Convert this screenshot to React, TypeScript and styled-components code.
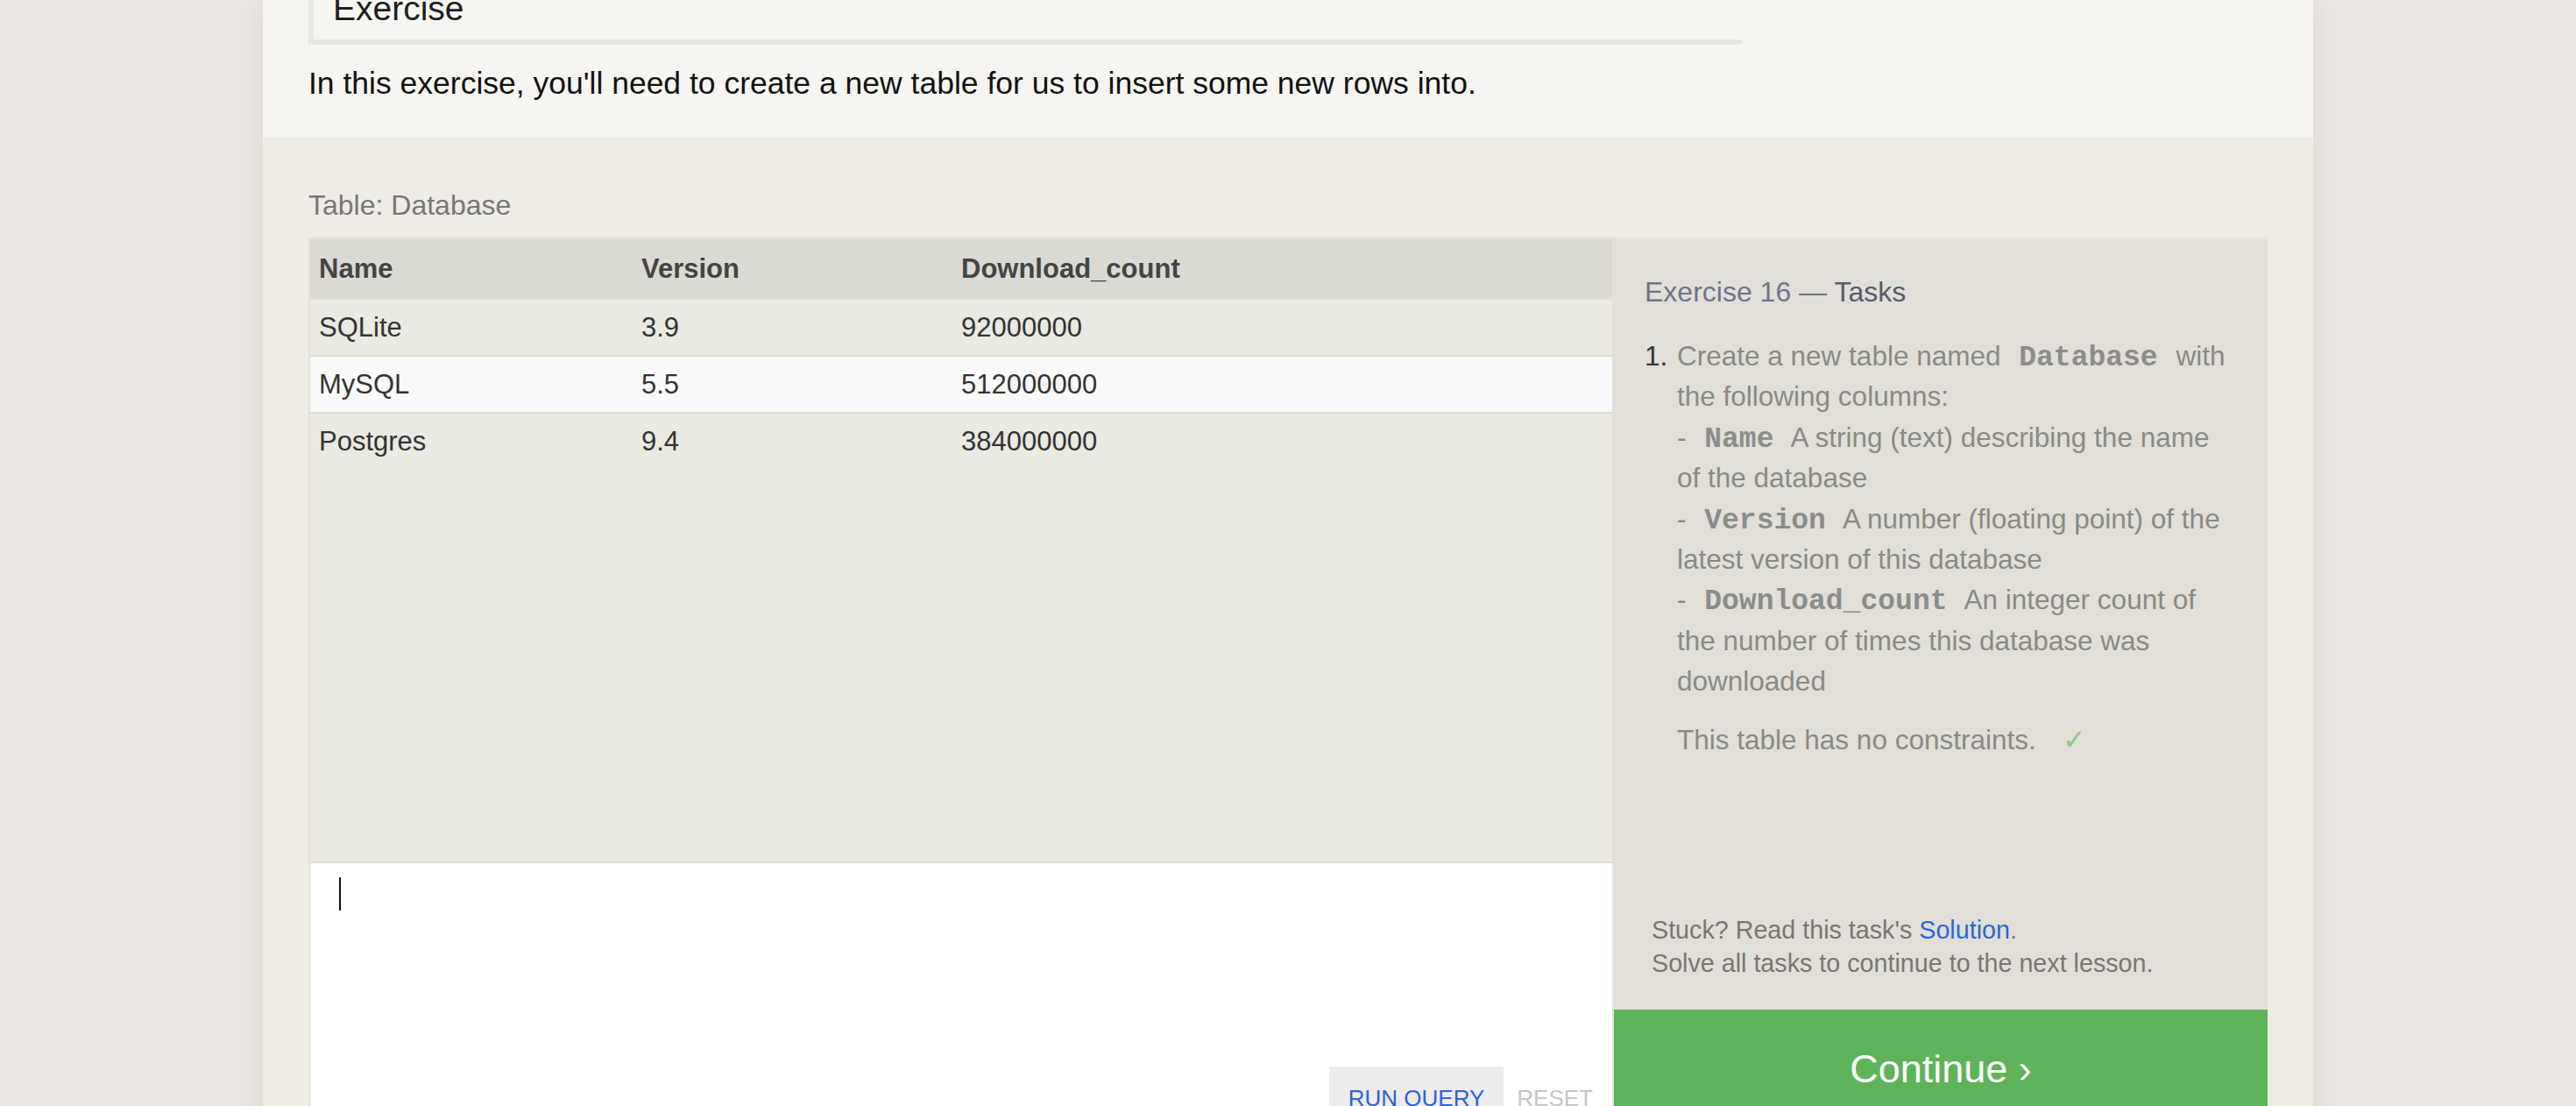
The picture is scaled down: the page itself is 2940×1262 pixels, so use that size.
import styled, { createGlobalStyle } from 'styled-components'

const SANS = '"Liberation Sans Narrow", "Arial Narrow", "Liberation Sans", Arial, sans-serif'
const MONO = '"Liberation Mono", "Courier New", monospace'

const GlobalStyle = createGlobalStyle`
  html, body {
    margin: 0;
    padding: 0;
    background: #ebe7e4;
  }
  body {
    font-family: ${SANS};
    -webkit-font-smoothing: antialiased;
  }
  * {
    box-sizing: border-box;
  }
`

const Page = styled.div`
  width: 2340px;
  margin: 0 auto;
  background: #f6f5f1;
  box-shadow: 0 0 32px rgba(60, 40, 30, 0.08);
`

const Intro = styled.section`
  display: flow-root;
  padding: 0 52px 37px;
`

const ExerciseBox = styled.div`
  width: 1636px;
  margin-top: -18px;
  padding: 0 0 7px 22px;
  border-left: 6px solid #e9e8e0;
  border-bottom: 6px solid #e9e8e0;
`

const ExerciseTitle = styled.h2`
  margin: 0;
  font-size: 39px;
  line-height: 56px;
  font-weight: normal;
  color: #1e1e1e;
`

const IntroText = styled.p`
  margin: 20px 0 0;
  font-size: 35.5px;
  line-height: 48px;
  color: #111;
`

const Workspace = styled.section`
  background: #efece5;
  border-radius: 6px 6px 0 0;
  padding: 58px 52px 52px;
`

const TableLabel = styled.div`
  font-size: 32px;
  line-height: 40px;
  color: #777;
  margin-bottom: 17px;
`

const Split = styled.div`
  display: grid;
  grid-template-columns: 1490px 746px;
`

const LeftCol = styled.div`
  display: flex;
  flex-direction: column;
  border: 2px solid #e2e0d9;
  border-top-width: 3px;
  border-bottom: 0;
`

const TableArea = styled.div`
  height: 711px;
  background: #eae9e2;
  border-bottom: 2px solid #dfddd6;
`

const HeadRow = styled.div`
  display: grid;
  grid-template-columns: 368px 365px 1fr;
  height: 66px;
  line-height: 66px;
  background: #dadad2;
  font-size: 31px;
  font-weight: bold;
  color: #444;
`

const Row = styled.div<{ $alt?: boolean }>`
  display: grid;
  grid-template-columns: 368px 365px 1fr;
  height: 65px;
  line-height: 63px;
  border-top: 2px solid #dedcd6;
  background: ${p => (p.$alt ? '#f9f9f9' : '#eae9e2')};
  font-size: 31px;
  color: #333;
`

const Cell = styled.div`
  padding-left: 10px;
  white-space: nowrap;
`

const Editor = styled.div`
  height: 302px;
  background: #fff;
  display: flex;
  flex-direction: column;
`

const Caret = styled.span`
  display: block;
  width: 2px;
  height: 38px;
  margin: 16px 0 0 33px;
  background: #111;
`

const ButtonRow = styled.div`
  margin-top: auto;
  display: flex;
  justify-content: flex-end;
`

const EditorButton = styled.button<{ $ghost?: boolean }>`
  height: 70px;
  line-height: 72px;
  border: 0;
  font-family: ${SANS};
  font-size: 26px;
  padding: ${p => (p.$ghost ? '0 22px 0 15px' : '0 22px')};
  background: ${p => (p.$ghost ? 'transparent' : '#ececec')};
  color: ${p => (p.$ghost ? '#c6c6c6' : '#2f62d5')};
  cursor: pointer;
`

const TaskPanel = styled.aside`
  display: flex;
  flex-direction: column;
  background: #e1dfd8;
  border-top: 3px solid #e6e4dd;
`

const TaskBody = styled.div`
  flex: 1;
  padding: 37px 16px 0 35px;
`

const PanelTitle = styled.h3`
  margin: 0;
  font-size: 32px;
  line-height: 44px;
  font-weight: normal;
  color: #6e7587;
  span {
    color: #555c6c;
  }
`

const TaskList = styled.ol`
  list-style: none;
  margin: 28px 0 0;
  padding: 0;
`

const TaskItem = styled.li`
  display: flex;
  font-size: 31.5px;
  line-height: 46.4px;
  color: #8a8a84;
  white-space: nowrap;
`

const TaskNum = styled.span`
  flex: none;
  width: 37px;
  color: #333;
`

const Code = styled.code`
  font-family: ${MONO};
  font-weight: bold;
  font-size: 33px;
  line-height: 1;
  color: #8c8c8a;
  padding: 0 12px;
`

const Constraint = styled.p`
  margin: 20px 0 0 37px;
  font-size: 31.5px;
  line-height: 46px;
  color: #8a8a84;
`

const Check = styled.span`
  color: #8cc98a;
  margin-left: 30px;
`

const PanelFooter = styled.div`
  padding: 0 30px 34px 43px;
  font-size: 28.7px;
  line-height: 38px;
  color: #7a7672;
  a {
    color: #2d66d4;
    text-decoration: none;
  }
`

const ContinueButton = styled.button`
  display: block;
  width: 100%;
  height: 135px;
  line-height: 135px;
  border: 0;
  padding: 0;
  background: #5fb35a;
  color: #fff;
  font-family: ${SANS};
  font-size: 45px;
  cursor: pointer;
`

const rows = [
  { name: 'SQLite', version: '3.9', downloads: '92000000' },
  { name: 'MySQL', version: '5.5', downloads: '512000000' },
  { name: 'Postgres', version: '9.4', downloads: '384000000' },
]

export default function App() {
  return (
    <>
      <GlobalStyle />
      <Page>
        <Intro>
          <ExerciseBox>
            <ExerciseTitle>Exercise</ExerciseTitle>
          </ExerciseBox>
          <IntroText>
            In this exercise, you'll need to create a new table for us to insert some new rows into.
          </IntroText>
        </Intro>
        <Workspace>
          <TableLabel>Table: Database</TableLabel>
          <Split>
            <LeftCol>
              <TableArea>
                <HeadRow>
                  <Cell>Name</Cell>
                  <Cell>Version</Cell>
                  <Cell>Download_count</Cell>
                </HeadRow>
                {rows.map((r, i) => (
                  <Row key={r.name} $alt={i === 1}>
                    <Cell>{r.name}</Cell>
                    <Cell>{r.version}</Cell>
                    <Cell>{r.downloads}</Cell>
                  </Row>
                ))}
              </TableArea>
              <Editor>
                <Caret />
                <ButtonRow>
                  <EditorButton>RUN QUERY</EditorButton>
                  <EditorButton $ghost>RESET</EditorButton>
                </ButtonRow>
              </Editor>
            </LeftCol>
            <TaskPanel>
              <TaskBody>
                <PanelTitle>
                  Exercise 16 — <span>Tasks</span>
                </PanelTitle>
                <TaskList>
                  <TaskItem>
                    <TaskNum>1.</TaskNum>
                    <span>
                      Create a new table named <Code>Database</Code> with
                      <br />
                      the following columns:
                      <br />- <Code>Name</Code> A string (text) describing the name
                      <br />
                      of the database
                      <br />- <Code>Version</Code> A number (floating point) of the
                      <br />
                      latest version of this database
                      <br />- <Code>Download_count</Code> An integer count of
                      <br />
                      the number of times this database was
                      <br />
                      downloaded
                    </span>
                  </TaskItem>
                </TaskList>
                <Constraint>
                  This table has no constraints.<Check>✓</Check>
                </Constraint>
              </TaskBody>
              <PanelFooter>
                Stuck? Read this task's <a href='#'>Solution</a>.
                <br />
                Solve all tasks to continue to the next lesson.
              </PanelFooter>
              <ContinueButton>Continue ›</ContinueButton>
            </TaskPanel>
          </Split>
        </Workspace>
      </Page>
    </>
  )
}
